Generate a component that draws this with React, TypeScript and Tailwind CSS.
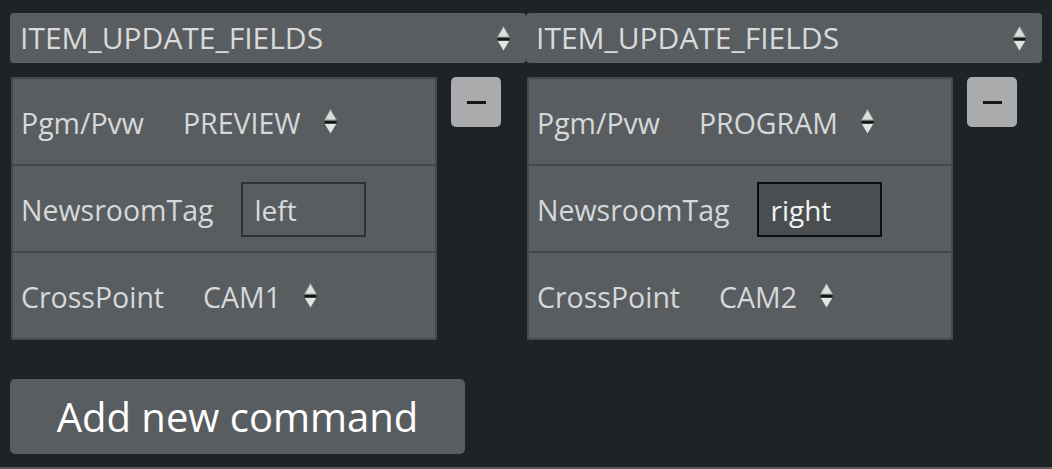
import React from "react";

function UpDown({ w = 13, h = 25 }: { w?: number; h?: number }) {
  return (
    <svg width={w} height={h} viewBox="0 0 13 25" className="shrink-0">
      <polygon points="6.5,0.5 12.5,11 0.5,11" fill="#dcdddd" stroke="#8e9092" strokeWidth="0.8" />
      <rect x="0.5" y="12" width="12" height="2.4" fill="#141516" />
      <polygon points="0.8,15 12.2,15 6.5,24.5" fill="#e2e3e3" />
    </svg>
  );
}

function Row({
  label,
  children,
  last,
}: {
  label: string;
  children: React.ReactNode;
  last?: boolean;
}) {
  return (
    <div
      className={
        "flex items-center pl-[8px] pt-[4px] " +
        (last ? "h-[85px]" : "h-[87px] border-b-2 border-[#45484b]")
      }
    >
      <span className="text-[28.5px] leading-none text-[#d6d8da]">{label}</span>
      <div className="ml-[28px] flex items-center">{children}</div>
    </div>
  );
}

function SelectValue({ value }: { value: string }) {
  return (
    <div className="flex items-center pl-[11px]">
      <span className="text-[28.5px] leading-none text-[#d6d8da]">{value}</span>
      <span className="ml-[23px] flex items-center -translate-y-[2px]">
        <UpDown w={13} h={25} />
      </span>
    </div>
  );
}

function Column({
  pgm,
  tag,
  cam,
  focused,
}: {
  pgm: string;
  tag: string;
  cam: string;
  focused?: boolean;
}) {
  return (
    <div className="w-[516px] shrink-0">
      <div className="h-[50px] rounded-[4px] bg-[#5a5d60] flex items-center justify-between pl-[10px] pr-[16px]">
        <span className="text-[30px] leading-none text-[#d9dadb]">ITEM_UPDATE_FIELDS</span>
        <UpDown />
      </div>
      <div className="mt-[14px] flex items-start">
        <div className="ml-[1px] w-[426px] border-2 border-[#46494c] bg-[#5a5d60]">
          <Row label="Pgm/Pvw">
            <SelectValue value={pgm} />
          </Row>
          <Row label="NewsroomTag">
            <div
              className={
                "w-[125px] h-[55px] border-2 flex items-center pl-[11px] -translate-y-[1px] " +
                (focused
                  ? "border-[#0c0d0e] bg-[#4b4e51]"
                  : "border-[#2f3235] bg-[#5a5d60]")
              }
            >
              <span
                className={
                  "text-[28px] leading-none " +
                  (focused ? "text-[#f2f2f2]" : "text-[#d9dadb]")
                }
              >
                {tag}
              </span>
            </div>
          </Row>
          <Row label="CrossPoint" last>
            <SelectValue value={cam} />
          </Row>
        </div>
        <button className="ml-[14px] w-[50px] h-[50px] rounded-[5px] bg-[#a9abad] flex items-center justify-center">
          <span className="block w-[19px] h-[3px] bg-[#151617]" />
        </button>
      </div>
    </div>
  );
}

export default function App() {
  return (
    <div className="min-h-screen bg-[#1f2226] font-['Open_Sans',sans-serif] overflow-hidden">
      <div className="flex px-[10px] pt-[13px]">
        <Column pgm="PREVIEW" tag="left" cam="CAM1" />
        <Column pgm="PROGRAM" tag="right" cam="CAM2" focused />
      </div>
      <div className="px-[10px] mt-[39px]">
        <button className="w-[455px] h-[75px] rounded-[5px] bg-[#5a5d60] flex items-center justify-center">
          <span className="text-[40px] leading-none text-white">Add new command</span>
        </button>
      </div>
      <div className="mt-[13px] h-[20px] bg-[#5a5d60]" />
    </div>
  );
}
